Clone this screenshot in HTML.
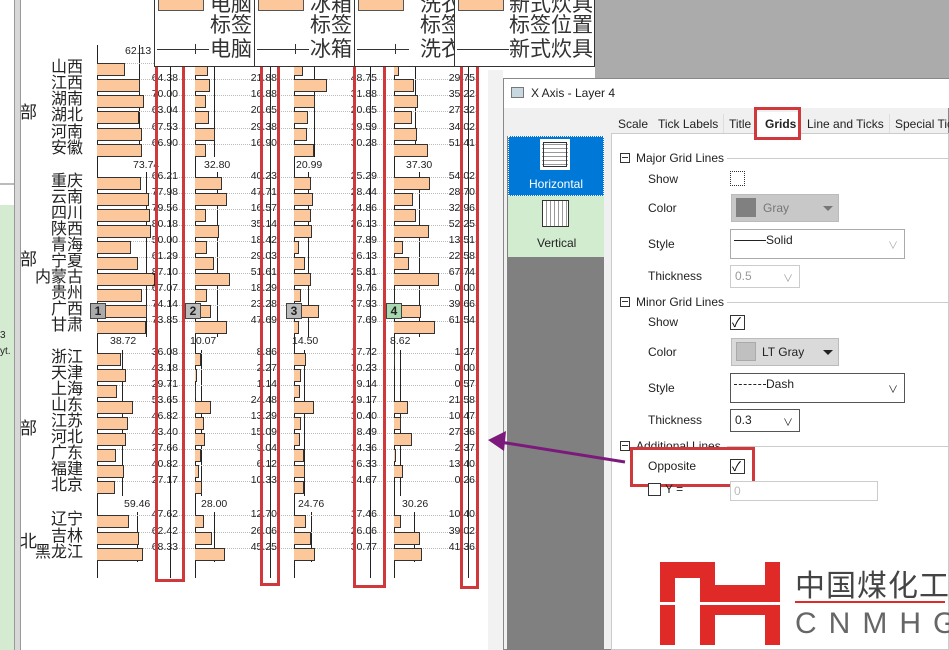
<!DOCTYPE html>
<html><head><meta charset="utf-8">
<style>
*{margin:0;padding:0;box-sizing:border-box}
body{width:949px;height:650px;position:relative;overflow:hidden;background:#fff;font-family:"Liberation Sans","Noto Sans CJK SC",sans-serif}
.a{position:absolute}
.r{position:absolute;left:0;width:500px;height:1px}
.r:before{content:"";position:absolute;left:97px;width:381px;top:0;border-top:1px dotted #bbb}
.r i{position:absolute;top:0;height:13px;background:#fcc89b;border:1px solid #333;border-left:none}
.r b{position:absolute;top:-7px;width:40px;text-align:right;font-weight:normal;font-size:10.5px;color:#222;font-family:"Liberation Sans",sans-serif}
.r u{position:absolute;right:417px;top:-3px;font-size:16px;line-height:16px;text-decoration:none;color:#222;white-space:nowrap;font-family:"Liberation Sans","Noto Sans CJK SC",sans-serif}
.l1{left:138px}.l2{left:237px}.l3{left:337px}.l4{left:435px}
.vl{position:absolute;width:1px;background:#222}
.h{position:absolute;font-size:10.5px;color:#222}
.rb{position:absolute;border:3px solid #d0393b}
.bd{position:absolute;width:16px;height:16px;border:1px solid #444;font-size:12px;font-weight:bold;text-align:center;line-height:14px;color:#222}
.lg{position:absolute;top:0;height:66px;width:100px;border-right:1px solid #333;overflow:hidden;font-size:21px;color:#333;font-family:"Liberation Sans","Noto Sans CJK SC",sans-serif}
.lg div{position:absolute;right:2px;white-space:nowrap;line-height:22px}
.lg .sw{position:absolute;left:3px;top:-2px;width:46px;height:13px;background:#fcc89b;border:1px solid #555}
.lg .ln{position:absolute;left:2px;top:49px;width:52px;border-top:1px solid #333}
.lg .tk{position:absolute;left:40px;top:44px;height:10px;border-left:1px solid #333}
.dl{font-size:12px;color:#222;position:absolute;white-space:nowrap}
.cb{position:absolute;width:15px;height:15px;border:1px solid #333;background:#fff}
.box{position:absolute;border:1px solid #aaa;background:#fff;font-size:12px;color:#222}
</style></head><body>
<div class="a" style="left:0;top:0;width:14px;height:650px;background:#fff"></div>
<div class="a" style="left:0;top:183px;width:14px;height:2px;background:#bbb"></div>
<div class="a" style="left:0;top:205px;width:14px;height:445px;background:#d4ebd2"></div>
<div class="a" style="left:0;top:330px;font-size:10px;color:#222">3</div>
<div class="a" style="left:0;top:346px;font-size:10px;color:#222">yt.</div>
<div class="a" style="left:14px;top:0;width:7px;height:650px;background:#d8d8d8;border-left:1px solid #999;border-right:1px solid #999"></div>
<div class="a" style="left:20px;top:98px;font-size:17px;color:#222">部</div>
<div class="a" style="left:20px;top:245px;font-size:17px;color:#222">部</div>
<div class="a" style="left:20px;top:414px;font-size:17px;color:#222">部</div>
<div class="a" style="left:20px;top:527px;font-size:17px;color:#222">北</div>
<div class="a" style="left:595px;top:0;width:354px;height:78px;background:#ababab"></div>
<div class="a" style="left:488px;top:70px;width:15px;height:580px;background:#f2f2f2"></div>

<div class="vl" style="left:97px;top:45px;height:533px"></div>
<div class="vl" style="left:195px;top:45px;height:533px"></div>
<div class="vl" style="left:294px;top:45px;height:533px"></div>
<div class="vl" style="left:394px;top:45px;height:533px"></div>
<div class="vl" style="left:170px;top:60px;height:518px"></div>
<div class="vl" style="left:270px;top:60px;height:518px"></div>
<div class="vl" style="left:370px;top:60px;height:518px"></div>
<div class="vl" style="left:468px;top:60px;height:518px"></div>
<div class="vl" style="left:139px;top:45px;height:112px"></div>
<div class="vl" style="left:146px;top:172px;height:165px"></div>
<div class="vl" style="left:217px;top:172px;height:165px"></div>
<div class="vl" style="left:308px;top:172px;height:165px"></div>
<div class="vl" style="left:419px;top:172px;height:165px"></div>
<div class="vl" style="left:122px;top:350px;height:146px"></div>
<div class="vl" style="left:201px;top:350px;height:146px"></div>
<div class="vl" style="left:304px;top:350px;height:146px"></div>
<div class="vl" style="left:400px;top:350px;height:146px"></div>
<div class="vl" style="left:137px;top:512px;height:50px"></div>
<div class="vl" style="left:214px;top:512px;height:50px"></div>
<div class="vl" style="left:311px;top:512px;height:50px"></div>
<div class="vl" style="left:414px;top:512px;height:50px"></div>
<div class="vl" style="left:214px;top:60px;height:97px"></div>
<div class="vl" style="left:314px;top:60px;height:97px"></div>
<div class="vl" style="left:415px;top:60px;height:97px"></div>

<div class="h" style="left:125px;top:45px">62.13</div>
<div class="h" style="left:133px;top:159px">73.74</div>
<div class="h" style="left:204px;top:159px">32.80</div>
<div class="h" style="left:296px;top:159px">20.99</div>
<div class="h" style="left:406px;top:159px">37.30</div>
<div class="h" style="left:110px;top:335px">38.72</div>
<div class="h" style="left:190px;top:335px">10.07</div>
<div class="h" style="left:292px;top:335px">14.50</div>
<div class="h" style="left:390px;top:335px">8.62</div>
<div class="h" style="left:124px;top:498px">59.46</div>
<div class="h" style="left:201px;top:498px">28.00</div>
<div class="h" style="left:298px;top:498px">24.76</div>
<div class="h" style="left:402px;top:498px">30.26</div>

<div class="r" style="top:63px"><u>山西</u><i style="left:97px;width:28px"></i><i style="left:195px;width:13px"></i><i style="left:294px;width:9px"></i><i style="left:394px;width:5px"></i></div>
<div class="r" style="top:79px"><u>江西</u><i style="left:97px;width:43px"></i><i style="left:195px;width:15px"></i><i style="left:294px;width:33px"></i><i style="left:394px;width:20px"></i><b class="l1">64.38</b><b class="l2">21.88</b><b class="l3">48.75</b><b class="l4">29.75</b></div>
<div class="r" style="top:95px"><u>湖南</u><i style="left:97px;width:47px"></i><i style="left:195px;width:11px"></i><i style="left:294px;width:21px"></i><i style="left:394px;width:24px"></i><b class="l1">70.00</b><b class="l2">16.88</b><b class="l3">31.88</b><b class="l4">35.22</b></div>
<div class="r" style="top:111px"><u>湖北</u><i style="left:97px;width:42px"></i><i style="left:195px;width:14px"></i><i style="left:294px;width:14px"></i><i style="left:394px;width:18px"></i><b class="l1">63.04</b><b class="l2">20.65</b><b class="l3">20.65</b><b class="l4">27.32</b></div>
<div class="r" style="top:128px"><u>河南</u><i style="left:97px;width:45px"></i><i style="left:195px;width:20px"></i><i style="left:294px;width:13px"></i><i style="left:394px;width:23px"></i><b class="l1">67.53</b><b class="l2">29.38</b><b class="l3">19.59</b><b class="l4">34.02</b></div>
<div class="r" style="top:144px"><u>安徽</u><i style="left:97px;width:45px"></i><i style="left:195px;width:11px"></i><i style="left:294px;width:20px"></i><i style="left:394px;width:34px"></i><b class="l1">66.90</b><b class="l2">16.90</b><b class="l3">30.28</b><b class="l4">51.41</b></div>

<div class="r" style="top:177px"><u>重庆</u><i style="left:97px;width:44px"></i><i style="left:195px;width:27px"></i><i style="left:294px;width:17px"></i><i style="left:394px;width:36px"></i><b class="l1">66.21</b><b class="l2">40.23</b><b class="l3">25.29</b><b class="l4">54.02</b></div>
<div class="r" style="top:193px"><u>云南</u><i style="left:97px;width:52px"></i><i style="left:195px;width:32px"></i><i style="left:294px;width:19px"></i><i style="left:394px;width:19px"></i><b class="l1">77.98</b><b class="l2">47.71</b><b class="l3">28.44</b><b class="l4">28.70</b></div>
<div class="r" style="top:209px"><u>四川</u><i style="left:97px;width:53px"></i><i style="left:195px;width:11px"></i><i style="left:294px;width:17px"></i><i style="left:394px;width:22px"></i><b class="l1">79.56</b><b class="l2">16.57</b><b class="l3">24.86</b><b class="l4">32.96</b></div>
<div class="r" style="top:225px"><u>陕西</u><i style="left:97px;width:54px"></i><i style="left:195px;width:24px"></i><i style="left:294px;width:18px"></i><i style="left:394px;width:35px"></i><b class="l1">80.18</b><b class="l2">35.14</b><b class="l3">26.13</b><b class="l4">52.25</b></div>
<div class="r" style="top:241px"><u>青海</u><i style="left:97px;width:34px"></i><i style="left:195px;width:12px"></i><i style="left:294px;width:5px"></i><i style="left:394px;width:9px"></i><b class="l1">50.00</b><b class="l2">18.42</b><b class="l3">7.89</b><b class="l4">13.51</b></div>
<div class="r" style="top:257px"><u>宁夏</u><i style="left:97px;width:41px"></i><i style="left:195px;width:19px"></i><i style="left:294px;width:11px"></i><i style="left:394px;width:15px"></i><b class="l1">61.29</b><b class="l2">29.03</b><b class="l3">16.13</b><b class="l4">22.58</b></div>
<div class="r" style="top:273px"><u>内蒙古</u><i style="left:97px;width:58px"></i><i style="left:195px;width:35px"></i><i style="left:294px;width:17px"></i><i style="left:394px;width:45px"></i><b class="l1">87.10</b><b class="l2">51.61</b><b class="l3">25.81</b><b class="l4">67.74</b></div>
<div class="r" style="top:289px"><u>贵州</u><i style="left:97px;width:45px"></i><i style="left:195px;width:12px"></i><i style="left:294px;width:7px"></i><b class="l1">67.07</b><b class="l2">18.29</b><b class="l3">9.76</b><b class="l4">0.00</b></div>
<div class="r" style="top:305px"><u>广西</u><i style="left:97px;width:50px"></i><i style="left:195px;width:16px"></i><i style="left:294px;width:25px"></i><i style="left:394px;width:27px"></i><b class="l1">74.14</b><b class="l2">23.28</b><b class="l3">37.93</b><b class="l4">39.66</b></div>
<div class="r" style="top:321px"><u>甘肃</u><i style="left:97px;width:49px"></i><i style="left:195px;width:32px"></i><i style="left:294px;width:5px"></i><i style="left:394px;width:41px"></i><b class="l1">73.85</b><b class="l2">47.69</b><b class="l3">7.69</b><b class="l4">61.54</b></div>

<div class="r" style="top:353px"><u>浙江</u><i style="left:97px;width:24px"></i><i style="left:195px;width:6px"></i><i style="left:294px;width:12px"></i><i style="left:394px;width:1px"></i><b class="l1">36.08</b><b class="l2">8.86</b><b class="l3">17.72</b><b class="l4">1.27</b></div>
<div class="r" style="top:369px"><u>天津</u><i style="left:97px;width:29px"></i><i style="left:195px;width:2px"></i><i style="left:294px;width:7px"></i><b class="l1">43.18</b><b class="l2">2.27</b><b class="l3">10.23</b><b class="l4">0.00</b></div>
<div class="r" style="top:385px"><u>上海</u><i style="left:97px;width:20px"></i><i style="left:195px;width:1px"></i><i style="left:294px;width:6px"></i><b class="l1">29.71</b><b class="l2">1.14</b><b class="l3">9.14</b><b class="l4">0.57</b></div>
<div class="r" style="top:401px"><u>山东</u><i style="left:97px;width:36px"></i><i style="left:195px;width:16px"></i><i style="left:294px;width:20px"></i><i style="left:394px;width:14px"></i><b class="l1">53.65</b><b class="l2">24.48</b><b class="l3">29.17</b><b class="l4">21.58</b></div>
<div class="r" style="top:417px"><u>江苏</u><i style="left:97px;width:31px"></i><i style="left:195px;width:9px"></i><i style="left:294px;width:7px"></i><i style="left:394px;width:7px"></i><b class="l1">46.82</b><b class="l2">13.29</b><b class="l3">10.40</b><b class="l4">10.47</b></div>
<div class="r" style="top:433px"><u>河北</u><i style="left:97px;width:29px"></i><i style="left:195px;width:10px"></i><i style="left:294px;width:6px"></i><i style="left:394px;width:18px"></i><b class="l1">43.40</b><b class="l2">15.09</b><b class="l3">8.49</b><b class="l4">27.36</b></div>
<div class="r" style="top:449px"><u>广东</u><i style="left:97px;width:19px"></i><i style="left:195px;width:6px"></i><i style="left:294px;width:10px"></i><i style="left:394px;width:2px"></i><b class="l1">27.66</b><b class="l2">9.04</b><b class="l3">14.36</b><b class="l4">2.37</b></div>
<div class="r" style="top:465px"><u>福建</u><i style="left:97px;width:27px"></i><i style="left:195px;width:4px"></i><i style="left:294px;width:11px"></i><i style="left:394px;width:9px"></i><b class="l1">40.82</b><b class="l2">6.12</b><b class="l3">16.33</b><b class="l4">13.40</b></div>
<div class="r" style="top:481px"><u>北京</u><i style="left:97px;width:18px"></i><i style="left:195px;width:7px"></i><i style="left:294px;width:10px"></i><b class="l1">27.17</b><b class="l2">10.33</b><b class="l3">14.67</b><b class="l4">0.26</b></div>

<div class="r" style="top:515px"><u>辽宁</u><i style="left:97px;width:32px"></i><i style="left:195px;width:9px"></i><i style="left:294px;width:12px"></i><i style="left:394px;width:7px"></i><b class="l1">47.62</b><b class="l2">12.70</b><b class="l3">17.46</b><b class="l4">10.40</b></div>
<div class="r" style="top:532px"><u>吉林</u><i style="left:97px;width:42px"></i><i style="left:195px;width:17px"></i><i style="left:294px;width:17px"></i><i style="left:394px;width:26px"></i><b class="l1">62.42</b><b class="l2">26.06</b><b class="l3">26.06</b><b class="l4">39.02</b></div>
<div class="r" style="top:548px"><u>黑龙江</u><i style="left:97px;width:46px"></i><i style="left:195px;width:30px"></i><i style="left:294px;width:21px"></i><i style="left:394px;width:28px"></i><b class="l1">68.33</b><b class="l2">45.25</b><b class="l3">30.77</b><b class="l4">41.36</b></div>

<div class="bd" style="left:90px;top:303px;background:#aaa">1</div>
<div class="bd" style="left:185px;top:303px;background:#bbb">2</div>
<div class="bd" style="left:286px;top:303px;background:#bbb">3</div>
<div class="bd" style="left:386px;top:303px;background:#a8d8b0">4</div>

<div class="rb" style="left:155px;top:41px;width:30px;height:541px"></div>
<div class="rb" style="left:260px;top:55px;width:20px;height:531px"></div>
<div class="rb" style="left:353px;top:57px;width:33px;height:531px"></div>
<div class="rb" style="left:460px;top:59px;width:19px;height:530px"></div>

<div class="a" style="left:154px;top:0;width:441px;height:67px;background:#fff;border-left:1px solid #333;border-right:1px solid #333;border-bottom:1px solid #333"></div>
<div class="lg" style="left:155px"><span class="sw"></span><div style="top:-6px">电脑</div><div style="top:15px">标签</div><div style="top:39px">电脑</div><span class="ln"></span><span class="tk"></span></div>
<div class="lg" style="left:255px"><span class="sw"></span><div style="top:-6px">冰箱</div><div style="top:15px">标签</div><div style="top:39px">冰箱</div><span class="ln"></span><span class="tk"></span></div>
<div class="lg" style="left:355px"><span class="sw"></span><div style="top:-6px;right:-8px">洗衣</div><div style="top:15px;right:-8px">标签</div><div style="top:39px;right:-8px">洗衣</div><span class="ln"></span><span class="tk"></span></div>
<div class="lg" style="left:455px;width:140px;border-right:none"><span class="sw"></span><div style="top:-6px">新式炊具</div><div style="top:15px">标签位置</div><div style="top:39px">新式炊具</div><span class="ln"></span></div>

<div class="a" style="left:503px;top:78px;width:446px;height:572px;background:#f0f0f0;border:1px solid #888"></div>
<div class="a" style="left:504px;top:79px;width:445px;height:29px;background:#fff"></div>
<div class="a" style="left:511px;top:87px;width:13px;height:11px;background:#c8d8e0;border:1px solid #777"></div>
<div class="dl" style="left:531px;top:86px">X Axis - Layer 4</div>
<div class="a" style="left:507px;top:136px;width:97px;height:514px;background:#808080"></div>
<div class="a" style="left:508px;top:136px;width:96px;height:60px;background:#0078d7;border:1px dotted #fff"></div>
<div class="a" style="left:540px;top:139px;width:30px;height:31px;background:#fff;border:2px solid #fff;outline:1px solid #333;outline-offset:-4px;background-image:repeating-linear-gradient(#fff 0 3px,#999 3px 4px)"></div>
<div class="dl" style="left:529px;top:177px;color:#fff">Horizontal</div>
<div class="a" style="left:508px;top:196px;width:96px;height:61px;background:#d2ecd0"></div>
<div class="a" style="left:542px;top:200px;width:27px;height:27px;border:1px solid #333;background:#fff;background-image:repeating-linear-gradient(90deg,#fff 0 3px,#999 3px 4px)"></div>
<div class="dl" style="left:537px;top:236px">Vertical</div>
<div class="a" style="left:611px;top:133px;width:338px;height:517px;background:#fff;border:1px solid #ccc"></div>
<div class="dl" style="left:618px;top:117px">Scale</div>
<div class="dl" style="left:658px;top:117px">Tick Labels</div>
<div class="a" style="left:723px;top:114px;width:1px;height:19px;background:#ddd"></div>
<div class="dl" style="left:729px;top:117px">Title</div>
<div class="a" style="left:757px;top:112px;width:43px;height:24px;background:#fff"></div>
<div class="dl" style="left:765px;top:117px;font-weight:bold">Grids</div>
<div class="dl" style="left:807px;top:117px">Line and Ticks</div>
<div class="a" style="left:889px;top:114px;width:1px;height:19px;background:#ddd"></div>
<div class="dl" style="left:895px;top:117px">Special Tic</div>
<div class="rb" style="left:754px;top:107px;width:47px;height:33px"></div>
<div class="a" style="left:620px;top:153px;width:10px;height:10px;border:1px solid #333"></div><div class="a" style="left:622px;top:157px;width:6px;height:1px;background:#333"></div>
<div class="dl" style="left:636px;top:151px">Major Grid Lines</div>
<div class="a" style="left:727px;top:158px;width:222px;height:1px;background:#ccc"></div>
<div class="dl" style="left:648px;top:172px">Show</div>
<div class="cb" style="left:730px;top:171px;border:1px dotted #333"></div>
<div class="dl" style="left:648px;top:201px">Color</div>
<div class="a" style="left:731px;top:194px;width:108px;height:28px;background:#c8c8c8;border:1px solid #bbb"></div>
<div class="a" style="left:736px;top:198px;width:20px;height:19px;background:#808080"></div>
<div class="dl" style="left:763px;top:201px;color:#777">Gray</div>
<div class="a" style="left:823px;top:206px;border-left:5px solid transparent;border-right:5px solid transparent;border-top:5px solid #777"></div>
<div class="dl" style="left:648px;top:237px">Style</div>
<div class="box" style="left:730px;top:229px;width:175px;height:30px"><span style="position:absolute;left:3px;top:10px;width:32px;border-top:1px solid #222"></span><span style="position:absolute;left:35px;top:3px">Solid</span><span style="position:absolute;right:6px;top:7px;color:#aaa;font-size:10px">&#8744;</span></div>
<div class="dl" style="left:648px;top:269px">Thickness</div>
<div class="box" style="left:730px;top:265px;width:70px;height:23px;color:#999;border-color:#ccc"><span style="position:absolute;left:4px;top:3px">0.5</span><span style="position:absolute;right:6px;top:4px;font-size:10px">&#8744;</span></div>
<div class="a" style="left:620px;top:297px;width:10px;height:10px;border:1px solid #333"></div><div class="a" style="left:622px;top:301px;width:6px;height:1px;background:#333"></div>
<div class="dl" style="left:636px;top:295px">Minor Grid Lines</div>
<div class="a" style="left:727px;top:302px;width:222px;height:1px;background:#ccc"></div>
<div class="dl" style="left:648px;top:315px">Show</div>
<div class="cb" style="left:730px;top:315px"><span style="position:absolute;left:1px;top:-4px;font-size:13px">&#10003;</span></div>
<div class="dl" style="left:648px;top:345px">Color</div>
<div class="a" style="left:731px;top:338px;width:108px;height:28px;background:#dadada;border:1px solid #bbb"></div>
<div class="a" style="left:736px;top:342px;width:20px;height:19px;background:#c0c0c0;border:1px solid #aaa"></div>
<div class="dl" style="left:762px;top:345px">LT Gray</div>
<div class="a" style="left:823px;top:350px;border-left:5px solid transparent;border-right:5px solid transparent;border-top:5px solid #222"></div>
<div class="dl" style="left:648px;top:381px">Style</div>
<div class="box" style="left:730px;top:373px;width:175px;height:30px;border-color:#555"><span style="position:absolute;left:3px;top:10px;width:32px;border-top:1px dashed #222"></span><span style="position:absolute;left:35px;top:3px">Dash</span><span style="position:absolute;right:6px;top:7px;font-size:10px">&#8744;</span></div>
<div class="dl" style="left:648px;top:413px">Thickness</div>
<div class="box" style="left:730px;top:409px;width:70px;height:23px;border-color:#555"><span style="position:absolute;left:4px;top:3px">0.3</span><span style="position:absolute;right:6px;top:4px;font-size:10px">&#8744;</span></div>
<div class="a" style="left:620px;top:441px;width:10px;height:10px;border:1px solid #333"></div><div class="a" style="left:622px;top:445px;width:6px;height:1px;background:#333"></div>
<div class="dl" style="left:636px;top:439px">Additional Lines</div>
<div class="a" style="left:727px;top:446px;width:222px;height:1px;background:#ccc"></div>
<div class="dl" style="left:648px;top:459px">Opposite</div>
<div class="cb" style="left:730px;top:459px"><span style="position:absolute;left:1px;top:-4px;font-size:13px">&#10003;</span></div>
<div class="rb" style="left:630px;top:447px;width:125px;height:40px"></div>
<div class="cb" style="left:648px;top:483px;width:13px;height:13px"></div>
<div class="dl" style="left:665px;top:482px">Y =</div>
<div class="box" style="left:730px;top:481px;width:148px;height:20px;border-color:#ccc;color:#bbb"><span style="position:absolute;left:3px;top:2px">0</span></div>
<svg class="a" style="left:480px;top:425px" width="150" height="45"><line x1="145" y1="37" x2="20" y2="17" stroke="#7b1a7b" stroke-width="3"/><polygon points="8,15 26,6 24,26" fill="#7b1a7b"/></svg>
<div class="a" style="left:660px;top:562px;width:15px;height:83px;background:#e02a27"></div>
<div class="a" style="left:660px;top:562px;width:55px;height:16px;background:#e02a27"></div>
<div class="a" style="left:700px;top:562px;width:15px;height:83px;background:#e02a27"></div>
<div class="a" style="left:715px;top:585px;width:52px;height:30px;background:#e02a27"></div>
<div class="a" style="left:765px;top:562px;width:15px;height:83px;background:#e02a27"></div>
<div class="a" style="left:660px;top:602px;width:120px;height:3px;background:#fff"></div>
<div class="a" style="left:795px;top:566px;font-size:30px;color:#444;letter-spacing:1px;white-space:nowrap;line-height:34px;font-family:'Noto Sans CJK SC',sans-serif">中国煤化工</div>
<div class="a" style="left:795px;top:601px;width:150px;height:2px;background:#e02a27"></div>
<div class="a" style="left:795px;top:607px;font-size:30px;color:#666;letter-spacing:12px;white-space:nowrap;line-height:34px">CNMHG</div>
</body></html>
